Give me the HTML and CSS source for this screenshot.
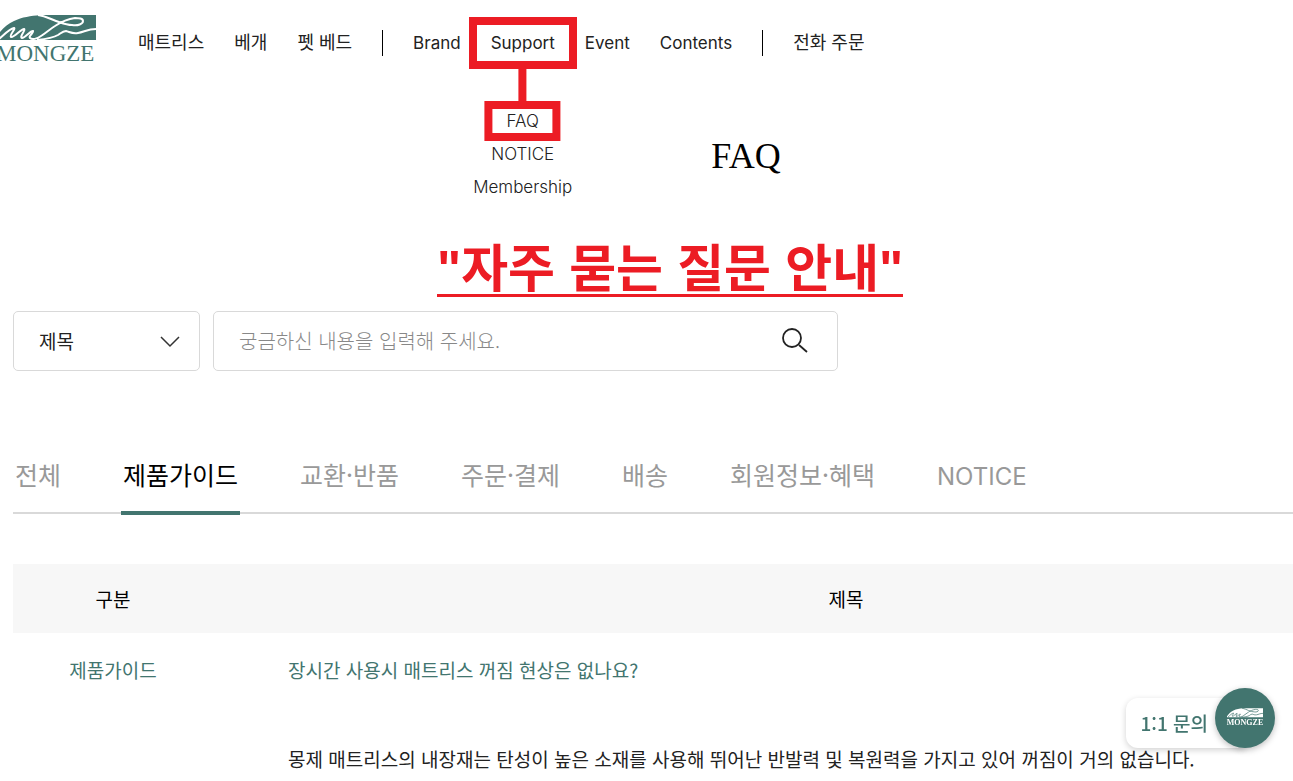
FILE: index.html
```html
<!DOCTYPE html>
<html lang="ko">
<head>
<meta charset="utf-8">
<meta name="viewport" content="width=device-width, initial-scale=1">
<title>FAQ · MONGZE</title>
<link rel="stylesheet" href="styles.css">
</head>
<body>

<svg class="defs" aria-hidden="true">
  <symbol id="hill" viewBox="0 0 100 26">
    <path class="hill-bg" d="M0 25V22C5 15 11 9 18 6C26 2 35 1 44 0H100V25Z"/>
    <path class="hill-line" d="M42 0C50 1 54 4 60 6C66 8 70 10 76 10C82 11 87 9 87 6C87 3 83 3 79 3C71 4 65 7 59 11C54 14 50 18 45 21C41 24 36 25 34 23C32 21 38 18 37 16C35 15 29 23 26 23C23 22 30 15 28 14C25 14 18 23 15 22C13 20 20 14 18 13C13 14 8 20 3 24M41 25C50 24 57 23 62 20C65 18 67 16 70 16C74 17 76 19 82 18C88 17 92 14 100 14"/>
  </symbol>
</svg>

<header class="header">
  <a class="logo" href="#">
    <svg class="logo-mark" aria-hidden="true"><use href="#hill"/></svg>
    <span class="logo-name">MONGZE</span>
  </a>
  <nav class="nav">
    <a class="ko" href="#">매트리스</a>
    <a class="ko" href="#">베개</a>
    <a class="ko" href="#">펫 베드</a>
    <span class="nav-bar"></span>
    <a href="#">Brand</a>
    <div class="nav-item">
      <a class="nav-marked" href="#">Support</a>
      <div class="submenu">
        <a class="submenu-marked" href="#">FAQ</a>
        <a href="#">NOTICE</a>
        <a href="#">Membership</a>
      </div>
    </div>
    <a href="#">Event</a>
    <a href="#">Contents</a>
    <span class="nav-bar"></span>
    <a class="ko" href="#">전화 주문</a>
  </nav>
</header>

<main class="content">
  <h1 class="page-title">FAQ</h1>
  <p class="note">"자주 묻는 질문 안내"</p>

  <form class="search">
    <div class="search-type">
      <select aria-label="검색 조건">
        <option>제목</option>
      </select>
      <svg class="chevron" viewBox="0 0 20 12" aria-hidden="true"><path d="M1 1l9 9 9-9"/></svg>
    </div>
    <div class="search-box">
      <input type="text" aria-label="검색어" placeholder="궁금하신 내용을 입력해 주세요.">
      <button class="search-btn" type="submit" aria-label="검색">
        <svg viewBox="0 0 28 28" aria-hidden="true"><circle cx="11" cy="11" r="9"/><path d="M18 18l8 7"/></svg>
      </button>
    </div>
  </form>

  <nav class="tabs">
    <a class="tab" href="#">전체</a>
    <a class="tab active" href="#">제품가이드</a>
    <a class="tab" href="#">교환·반품</a>
    <a class="tab" href="#">주문·결제</a>
    <a class="tab" href="#">배송</a>
    <a class="tab" href="#">회원정보·혜택</a>
    <a class="tab tab-en" href="#">NOTICE</a>
  </nav>

  <table class="faq">
    <thead>
      <tr><th class="col-type">구분</th><th>제목</th></tr>
    </thead>
    <tbody>
      <tr class="faq-q"><td class="col-type">제품가이드</td><td>장시간 사용시 매트리스 꺼짐 현상은 없나요?</td></tr>
      <tr class="faq-a"><td></td><td>몽제 매트리스의 내장재는 탄성이 높은 소재를 사용해 뛰어난 반발력 및 복원력을 가지고 있어 꺼짐이 거의 없습니다.</td></tr>
    </tbody>
  </table>
</main>

<a class="chat" href="#">
  <span class="chat-label">1:1 문의</span>
  <span class="chat-logo">
    <svg class="chat-mark" aria-hidden="true"><use href="#hill"/></svg>
    <span class="chat-name">MONGZE</span>
  </span>
</a>

</body>
</html>
```
FILE: styles.css
```css
:root{
  --green:#42756F;
  --red:#EC1C24;
  --ink:#222;
  --gray:#999;
  --line:#D9D9D9;
  --hill:var(--green);
  --hill-line:#fff;
}
*{box-sizing:border-box;}
body{
  margin:0;
  font-family:"Noto Sans CJK KR",sans-serif;
  font-size:19px;
  line-height:28px;
  color:var(--ink);
  background:#fff;
  overflow-x:hidden;
}
a{color:inherit; text-decoration:none;}
.defs{position:absolute; width:0; height:0;}

/* header */
.header{display:flex; align-items:flex-start; gap:42px; height:84px; padding-top:15px;}
.logo{flex:none; width:100px; margin-left:-4px; color:var(--green);}
.logo-mark{display:block; width:100px; height:26px;}
.logo-name{display:block; font:23px/26px "Liberation Serif",serif;}
.hill-bg{fill:var(--hill);}
.hill-line{fill:none; stroke:var(--hill-line); stroke-width:2;}

.nav{display:flex; align-items:center; gap:30px; padding-top:14px; white-space:nowrap; font:17px/28px Inter,sans-serif;}
.nav .ko{padding-bottom:3px; font-family:"Noto Sans CJK KR",sans-serif; font-size:18px; line-height:25px;}
.nav-bar{width:1px; height:26px; background:#000;}
.nav-item{position:relative;}
.nav-marked{position:relative;}
.nav-marked::before{content:""; position:absolute; inset:-16px -22px; border:8px solid var(--red);}
.submenu{position:absolute; top:78px; left:50%; transform:translateX(-50%); display:flex; flex-direction:column; align-items:center; gap:5px; font-weight:300; text-align:center;}
.submenu-marked{position:relative;}
.submenu-marked::before{content:""; position:absolute; inset:-6px -22px; border:8px solid var(--red);}
.submenu-marked::after{content:""; position:absolute; left:50%; bottom:100%; width:8px; height:38px; margin-left:-4px; background:var(--red);}

/* content runs past the right edge on narrow windows */
.content{min-width:1466px; margin-left:13px;}
.page-title{margin:50px 0 0; font:36px/44px "Liberation Serif",serif; color:#000; text-align:center;}
.note{width:max-content; margin:68px 0 14px 424px; border-bottom:3px solid var(--red); font:bold 51px/48px "Liberation Sans","Noto Sans CJK KR",sans-serif; color:var(--red);}

.search{display:flex; gap:13px; height:60px;}
.search-type{position:relative; width:187px;}
.search-type select{width:100%; height:100%; padding:0 25px; border:1px solid var(--line); border-radius:5px; background:#fff; appearance:none; font:inherit; color:var(--ink);}
.chevron{position:absolute; top:25px; right:20px; width:20px; height:12px; fill:none; stroke:#333; stroke-width:1.5; pointer-events:none;}
.search-box{display:flex; align-items:center; width:625px; padding:0 28px 0 25px; border:1px solid var(--line); border-radius:5px;}
.search-box input{flex:1; min-width:0; padding:0; border:0; outline:0; background:none; font:300 20px/28px "Noto Sans CJK KR",sans-serif;}
.search-box input::placeholder{color:#888; opacity:1;}
.search-btn{width:28px; height:28px; padding:0; border:0; background:none;}
.search-btn svg{display:block; width:28px; height:28px; fill:none; stroke:var(--ink); stroke-width:1.8;}

.tabs{display:flex; gap:58px; margin-top:82px; border-bottom:2px solid var(--line);}
.tab{height:62px; margin-bottom:-3px; padding:0 2px; font-size:25px; line-height:42px; color:var(--gray);}
.tab.active{color:#000; border-bottom:4px solid var(--green);}
.tab-en{font-family:Inter,sans-serif; font-size:24px; line-height:48px;}

.faq{width:100%; margin-top:50px; border-collapse:collapse; table-layout:fixed;}
.faq th{height:69px; padding:0; background:#F7F7F7; font-weight:400; color:#000;}
.faq td{padding:0 0 0 75px;}
.faq .col-type{width:200px; padding:0; text-align:center;}
.faq-q td{height:74px; color:var(--green);}
.faq-a td{height:104px;}

/* floating chat button */
.chat{--hill:#fff; --hill-line:var(--green); position:fixed; right:18px; bottom:33px; display:flex; align-items:flex-end; color:var(--green);}
.chat-label{height:50px; padding:0 37px 0 14px; margin-right:-30px; border-radius:12px 0 0 12px; background:#fff; box-shadow:0 2px 6px rgba(0,0,0,.18); font-weight:500; line-height:50px;}
.chat-logo{position:relative; display:flex; flex-direction:column; align-items:center; width:60px; height:60px; padding-top:20px; border-radius:50%; background:var(--green); color:#fff; box-shadow:0 2px 6px rgba(0,0,0,.25);}
.chat-mark{width:36px; height:10px;}
.chat-name{font:bold 8px/10px "Liberation Serif",serif;}
```
